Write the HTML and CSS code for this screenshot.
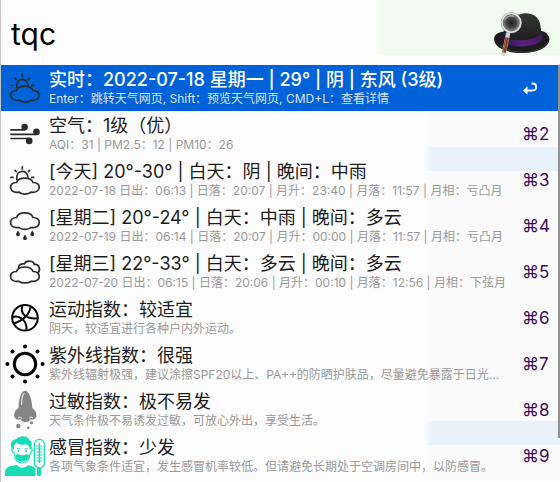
FILE: index.html
```html
<!DOCTYPE html>
<html lang="zh-CN">
<head>
<meta charset="utf-8">
<meta name="viewport" content="width=device-width, initial-scale=1">
<title>tqc</title>
<link rel="stylesheet" href="styles.css">
</head>
<body>
<svg class="defs" aria-hidden="true">
  <defs>
    <g id="cloud-sun" fill="none" stroke="#2c2c2c" stroke-width="1.7" stroke-linecap="round">
      <path d="M16.500 25.500C18.500 19.700 31 19.700 33 25.500C41.300 25.200 41.300 35.300 33 35.300L31 35.200C28.500 37.700 21.500 37.700 19 35.200L17 35.300C8.500 35.300 8.500 25.300 16.500 25.500Z"/>
      <path d="M16.800 22.500C15.500 12.500 27 12 28 20"/>
      <path d="M22.300 9.800V12M15 13.400L16.200 14.700M29.600 13.400L28.400 14.700M11 20.400H13M31.700 20.400H33.700"/>
    </g>
  </defs>
</svg>
<main class="launcher">
  <header class="search">
    <input class="query" type="text" value="tqc" aria-label="搜索" spellcheck="false">
    <svg class="hat" viewBox="0 0 60 50" aria-hidden="true">
      <defs>
        <linearGradient id="felt" x1="0" y1="0" x2="0" y2="1"><stop offset="0" stop-color="#363636"/><stop offset="1" stop-color="#1b1b1b"/></linearGradient>
        <linearGradient id="band" x1="0" x2="1"><stop offset="0" stop-color="#29113c"/><stop offset=".5" stop-color="#5a2284"/><stop offset="1" stop-color="#43195f"/></linearGradient>
        <radialGradient id="lens"><stop offset="0" stop-color="#202020"/><stop offset=".6" stop-color="#494949"/><stop offset="1" stop-color="#a0a0a0"/></radialGradient>
      </defs>
      <path d="M2 31C2 25 10 23 14 24H46C51 21 57 26 57.500 31C57 40 44 45 30 45S3 41 2 31Z" fill="#1c1c1c"/>
      <path d="M5 35C13 43 24 44 32 44C42 44 52 41 56 34" fill="none" stroke="#3a3a3a"/>
      <path d="M10.500 29C13 15 16 6.500 28 6.500C34 3.500 47 5 48.500 18L50 29C44 38 17 38 10.500 29Z" fill="url(#felt)"/>
      <path d="M10 26.500C19 35 43 34 50 25L50.500 31.500C44 40 19 41 9.500 33Z" fill="url(#band)"/>
      <path d="M16 26L11.700 46" stroke="#d4d4d4" stroke-width="4.200" stroke-linecap="round"/>
      <path d="M15.200 29.500L12 44.500" stroke="#7a3d18" stroke-width="3.600"/>
      <path d="M14.500 30L11.400 44" stroke="#b56a34"/>
      <circle cx="19.300" cy="14.800" r="9" fill="url(#lens)" stroke="#737373" stroke-width="3"/>
      <circle cx="19.300" cy="14.800" r="9.400" fill="none" stroke="#e2e2e2" stroke-width="1.700"/>
      <path d="M13 11.500C15 7.500 20 7.500 22 8.500" stroke="#b5b5b5" fill="none"/>
    </svg>
  </header>
  <div class="results">
    <ul class="list">
      <li><button class="row selected" type="button">
        <svg class="icon" viewBox="1 0 48 46" aria-hidden="true"><use href="#cloud-sun"/></svg>
        <span class="text"><span class="title">实时：2022-07-18 星期一 | 29° | 阴 | 东风 (3级)</span><span class="sub">Enter：跳转天气网页, Shift：预览天气网页, CMD+L：查看详情</span></span>
        <span class="key"><svg class="return" viewBox="0 0 24 20" aria-hidden="true"><path d="M9.500 5.500H10.500C15.500 5.500 15.500 12.500 10.500 12.500H4" fill="none" stroke="#fff" stroke-width="1.800"/><path d="M1 12.500L5.500 8.300V16.700Z" fill="#fff"/></svg></span>
      </button></li>
      <li><button class="row" type="button">
        <svg class="icon" viewBox="1 0 48 46" aria-hidden="true"><g fill="none" stroke="#2c2c2c" stroke-width="1.700" stroke-linecap="round"><path d="M11 18.800H24.500Q27 18.500 26.500 15.500M11 23.300H36Q39 23 38.500 20.500M11 27.500H29Q31.500 27.500 31 30"/></g><g fill="#2c2c2c"><circle cx="24.600" cy="15.900" r="3.200"/><circle cx="36.400" cy="20.900" r="3.300"/><circle cx="29.200" cy="29.900" r="3.300"/></g></svg>
        <span class="text"><span class="title">空气：1级（优）</span><span class="sub">AQI：31 | PM2.5：12 | PM10：26</span></span>
        <span class="key">⌘2</span>
      </button></li>
      <li><button class="row" type="button">
        <svg class="icon" viewBox="1 0 48 46" aria-hidden="true"><use href="#cloud-sun"/></svg>
        <span class="text"><span class="title">[今天] 20°-30° | 白天：阴 | 晚间：中雨</span><span class="sub">2022-07-18 日出：06:13 | 日落：20:07 | 月升：23:40 | 月落：11:57 | 月相：亏凸月</span></span>
        <span class="key">⌘3</span>
      </button></li>
      <li><button class="row" type="button">
        <svg class="icon" viewBox="1 0 48 46" aria-hidden="true"><path d="M16.500 14.500C18.500 8.300 31 8.300 33 14.500C41.300 14.200 41.300 24.700 33 24.600L31 24.500C28.500 27 21.500 27 19 24.500L17 24.600C8.500 24.700 8.500 14.300 16.500 14.500Z" fill="none" stroke="#2c2c2c" stroke-width="1.700"/><path d="M18 27.500C15 31.500 16 33 18 33S21 31.500 18 27.500ZM25 31.500C22 35.500 23 37 25 37S28 35.500 25 31.500ZM32.300 27.500C29.300 31.500 30.300 33 32.300 33S35.300 31.500 32.300 27.500Z" fill="#2c2c2c"/></svg>
        <span class="text"><span class="title">[星期二] 20°-24° | 白天：中雨 | 晚间：多云</span><span class="sub">2022-07-19 日出：06:14 | 日落：20:07 | 月升：00:00 | 月落：11:57 | 月相：亏凸月</span></span>
        <span class="key">⌘4</span>
      </button></li>
      <li><button class="row" type="button">
        <svg class="icon" viewBox="1 0 48 46" aria-hidden="true"><g fill="none" stroke="#2c2c2c" stroke-width="1.700"><path d="M16.500 22.500C18.500 16.500 31 16.500 33 22.500C41.300 22.200 41.300 32.500 33 32.400L31 32.300C28.500 34.500 21.500 34.500 19 32.300L17 32.400C8.500 32.500 8.500 22.300 16.500 22.500Z"/><path d="M18.500 19.500C18 15.500 21.500 14.500 24 15C26.500 10.500 33.500 11.500 34.500 15.500C39 15 41 20.500 38 24"/></g></svg>
        <span class="text"><span class="title">[星期三] 22°-33° | 白天：多云 | 晚间：多云</span><span class="sub">2022-07-20 日出：06:15 | 日落：20:06 | 月升：00:10 | 月落：12:56 | 月相：下弦月</span></span>
        <span class="key">⌘5</span>
      </button></li>
      <li><button class="row" type="button">
        <svg class="icon" viewBox="1 0 48 46" aria-hidden="true"><g fill="none" stroke="#080808" stroke-width="2"><circle cx="25" cy="22.800" r="12.800"/><path d="M22.500 10.300C20.500 16.500 22.500 24 37.500 23.500M30.500 11.500C30 18.500 24 25.500 13.500 28.500M12.500 22C18 20 27.500 24 26.500 35.500"/></g></svg>
        <span class="text"><span class="title">运动指数：较适宜</span><span class="sub">阴天，较适宜进行各种户内外运动。</span></span>
        <span class="key">⌘6</span>
      </button></li>
      <li><button class="row" type="button">
        <svg class="icon" viewBox="1 0 48 46" aria-hidden="true"><circle cx="25" cy="23" r="10.700" fill="none" stroke="#000" stroke-width="3"/><g fill="#000"><circle cx="25" cy="5.400" r="2"/><circle cx="37.500" cy="10.500" r="2"/><circle cx="42.600" cy="23" r="2"/><circle cx="37.500" cy="35.500" r="2"/><circle cx="25" cy="40.600" r="2"/><circle cx="12.500" cy="35.500" r="2"/><circle cx="7.400" cy="23" r="2"/><circle cx="12.500" cy="10.500" r="2"/></g></svg>
        <span class="text"><span class="title">紫外线指数：很强</span><span class="sub">紫外线辐射极强，建议涂擦SPF20以上、PA++的防晒护肤品，尽量避免暴露于日光…</span></span>
        <span class="key">⌘7</span>
      </button></li>
      <li><button class="row" type="button">
        <svg class="icon" viewBox="1 0 48 46" aria-hidden="true"><path d="M25 3.700C21 3.700 18.500 13 18.500 21C15 23.500 13.500 26 14.500 30C15.500 33 19 32.800 21 32.500C22 36 29 36 30 32.500C32 32.800 35.500 33 36.300 29.500C37 25 34.500 23 32.300 21C32 12 29 3.700 25 3.700Z" fill="#858585"/><path d="M21.500 18C21.300 11 23 6.500 24.500 6.500" fill="none" stroke="#eee" stroke-width="1.100"/><path d="M18 31Q20 28.500 22 31.500M29 31.500Q31 28.500 33 31" fill="none" stroke="#eee"/><g fill="#858585"><circle cx="18.300" cy="39" r="2.200"/><circle cx="28.300" cy="40.800" r="1.200"/><circle cx="31.500" cy="35.800" r="1.500"/></g></svg>
        <span class="text"><span class="title">过敏指数：极不易发</span><span class="sub">天气条件极不易诱发过敏，可放心外出，享受生活。</span></span>
        <span class="key">⌘8</span>
      </button></li>
      <li><button class="row" type="button">
        <svg class="icon" viewBox="1 0 48 46" aria-hidden="true"><g fill="#18dcb4"><path d="M11.500 15C9 8 14 6.500 16.500 6C20 2 28 2.500 29.500 7C33 8.500 31.500 12 31.300 15L29.500 17C30 12 27.500 11 25 11.500C21 12 18 11.500 17 9.500C14 11 13.500 14 14 17Z"/><path d="M15.500 22L18 21Q22.500 23.500 26.500 21L29 22C29 26.500 26 28.500 22 28.500S15.500 26.500 15.500 22Z"/><path d="M5 43V40C5 34 8.500 33.500 17 32C20 35.500 25 35.500 28 32C32 32.700 34.500 34 35.500 36V43Z"/><circle cx="18.500" cy="18.300" r="1"/><circle cx="26" cy="18.300" r="1"/></g><g fill="none" stroke="#18dcb4" stroke-width="1.200"><path d="M12.500 14.500C11 16 12 19 14 20C15 27 18 30 22.200 30S29.500 27 30.300 20C32.500 19 33 16 31 14.500M17 15.500L20 16M24.500 16L27.500 15.500M37.500 42V34.500C35.500 33.500 34.400 31.500 34.400 30V12C34.400 4.500 44.400 4.500 44.400 12V30C44.400 33 42.500 34.500 40.500 35V42"/><path d="M39.400 10V30M36.400 13H42.400M36.400 16H42.400M36.400 19H42.400M36.400 22H42.400M36.400 25H42.400M36.400 28H42.400"/></g><path d="M37.500 34H40.500V43H37.500Z" fill="#18dcb4"/></svg>
        <span class="text"><span class="title">感冒指数：少发</span><span class="sub">各项气象条件适宜，发生感冒机率较低。但请避免长期处于空调房间中，以防感冒。</span></span>
        <span class="key">⌘9</span>
      </button></li>
    </ul>
    <div class="track"><div class="thumb"></div></div>
  </div>
</main>
</body>
</html>
```
FILE: styles.css
```css
* { box-sizing: border-box; }

body {
  margin: 0;
  background: #fcfcfc;
  font-family: Inter, "Noto Sans CJK SC", sans-serif;
}

.defs { position: absolute; width: 0; height: 0; }

.launcher {
  min-height: 100vh;
  border-left: 1px solid #c4c4c4;
  background: #fcfcfc;
}

.search {
  display: flex;
  align-items: center;
  height: 65px;
  padding: 0 8px 0 10px;
  background: linear-gradient(90deg, #fcfcfc, #f1faef 8px) right top / 185px 55px no-repeat;
}

.query {
  flex: 1;
  min-width: 0;
  height: 48px;
  padding: 3px 0 0;
  border: 0;
  outline: 0;
  background: none;
  color: #000;
  font: 400 30px/45px Inter, "Noto Sans CJK SC", sans-serif;
}

.hat { width: 60px; height: 50px; }

.results {
  display: flex;
  background:
    linear-gradient(90deg, #fafafa, #e8f0fa 6px) right 82px / 134px 24px no-repeat,
    linear-gradient(90deg, #fafafa, #e8f0fa 6px) right 356px / 134px 24px no-repeat,
    linear-gradient(90deg, transparent, #fafafa 12px) right 46px / 140px 100% no-repeat;
}

.list {
  flex: 1;
  min-width: 0;
  margin: 0;
  padding: 0;
  list-style: none;
}

.row {
  display: flex;
  align-items: center;
  width: 100%;
  height: 46px;
  padding: 0;
  border: 0;
  background: none;
  color: #1c1c1c;
  font-family: inherit;
  text-align: left;
}

.icon { flex: none; width: 48px; height: 46px; }

.text {
  flex: 1;
  min-width: 0;
  display: flex;
  flex-direction: column;
}

.title,
.sub {
  overflow: hidden;
  white-space: nowrap;
  text-overflow: ellipsis;
}

.title { font-size: 18px; line-height: 22px; }
.sub { color: #999; font-size: 12px; line-height: 16px; }

.key {
  flex: none;
  width: 43px;
  padding-left: 7px;
  color: #3d0a5c;
  font-size: 17px;
  line-height: 20px;
}

.return { display: block; width: 24px; height: 20px; }

.selected { background: #0062d9; color: #fff; }
.selected .title { font-weight: 500; }
.selected .sub { color: #d5e5fa; }

.track { width: 2px; }
.thumb { height: 90%; background: #929292; }
```
